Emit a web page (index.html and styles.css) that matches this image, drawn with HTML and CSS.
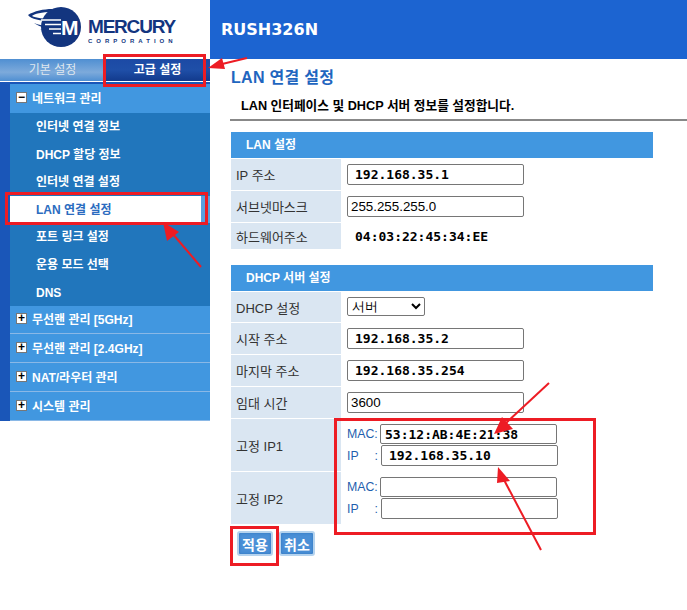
FILE: index.html
```html
<!DOCTYPE html>
<html lang="ko">
<head>
    <meta charset="UTF-8">
    <title>RUSH326N - LAN 연결 설정</title>
    <link rel="stylesheet" href="styles.css">
</head>
<body>
    <header class="top">
        <div class="logo">
            <svg class="logo-mark" width="60" height="46" viewBox="0 0 60 46">
                <circle cx="33" cy="25" r="20" fill="#13357f"/>
                <path d="M0 13 C6 9 16 7 24 7 L24 10 C14 10 6 12 4 14 C8 16 16 17 24 17 L24 19 C12 19 3 17 0 13 Z" fill="#13357f"/>
                <path d="M6 21 C10 23 16 24 24 24 L24 26 C16 26 10 24 6 21 Z" fill="#13357f"/>
                <path d="M12 27 C16 28 20 29 24 29 L24 31 C20 31 16 29 12 27 Z" fill="#13357f"/>
                <path d="M13 18 H33 M17 22.500 H33 M21 27 H33 M25 31.500 H33" stroke="#fff" stroke-width="1.400" fill="none"/>
                <text class="logo-m" x="33" y="33">M</text>
            </svg>
            <div class="logo-words">
                <div class="logo-name">MERCURY</div>
                <div class="logo-sub">CORPORATION</div>
            </div>
        </div>
        <div class="banner">RUSH326N</div>
    </header>

    <div class="page">
        <aside class="side">
            <div class="tabs">
                <div class="tab">기본 설정</div>
                <div class="tab tab-on">고급 설정</div>
            </div>
            <nav class="menu">
                <div class="menu-head"><span class="box">−</span>네트워크 관리</div>
                <div class="menu-sub">
                    <div class="menu-item">인터넷 연결 정보</div>
                    <div class="menu-item">DHCP 할당 정보</div>
                    <div class="menu-item">인터넷 연결 설정</div>
                    <div class="menu-item menu-item-on"><span>LAN 연결 설정</span></div>
                    <div class="menu-item">포트 링크 설정</div>
                    <div class="menu-item">운용 모드 선택</div>
                    <div class="menu-item">DNS</div>
                </div>
                <div class="menu-head"><span class="box">+</span>무선랜 관리 [5GHz]</div>
                <div class="menu-head"><span class="box">+</span>무선랜 관리 [2.4GHz]</div>
                <div class="menu-head"><span class="box">+</span>NAT/라우터 관리</div>
                <div class="menu-head"><span class="box">+</span>시스템 관리</div>
            </nav>
        </aside>

        <main class="content">
            <h1 class="title">LAN 연결 설정</h1>
            <p class="desc">LAN 인터페이스 및 DHCP 서버 정보를 설정합니다.</p>

            <section class="panel panel-lan">
                <h2 class="panel-head">LAN 설정</h2>
                <div class="row row-tall">
                    <div class="label">IP 주소</div>
                    <div class="field"><input class="input hand" value="192.168.35.1"></div>
                </div>
                <div class="row row-tall">
                    <div class="label">서브넷마스크</div>
                    <div class="field"><input class="input" value="255.255.255.0"></div>
                </div>
                <div class="row row-short">
                    <div class="label">하드웨어주소</div>
                    <div class="field"><span class="hand-text">04:03:22:45:34:EE</span></div>
                </div>
            </section>

            <section class="panel panel-dhcp">
                <h2 class="panel-head">DHCP 서버 설정</h2>
                <div class="row row-select">
                    <div class="label">DHCP 설정</div>
                    <div class="field">
                        <select class="select"><option>서버</option></select>
                    </div>
                </div>
                <div class="row row-tall">
                    <div class="label">시작 주소</div>
                    <div class="field"><input class="input hand" value="192.168.35.2"></div>
                </div>
                <div class="row row-tall">
                    <div class="label">마지막 주소</div>
                    <div class="field"><input class="input hand" value="192.168.35.254"></div>
                </div>
                <div class="row row-tall">
                    <div class="label">임대 시간</div>
                    <div class="field"><input class="input" value="3600"></div>
                </div>
                <div class="row row-pair">
                    <div class="label">고정 IP1</div>
                    <div class="pair">
                        <div class="pair-line"><span class="pair-key">MAC:</span><input class="input hand hand-mac" value="53:12:AB:4E:21:38"></div>
                        <div class="pair-line pair-ip"><span class="pair-key">IP<i>:</i></span><input class="input hand" value="192.168.35.10"></div>
                    </div>
                </div>
                <div class="row row-pair">
                    <div class="label">고정 IP2</div>
                    <div class="pair">
                        <div class="pair-line"><span class="pair-key">MAC:</span><input class="input"></div>
                        <div class="pair-line pair-ip"><span class="pair-key">IP<i>:</i></span><input class="input"></div>
                    </div>
                </div>
            </section>

            <div class="actions">
                <button class="btn">적용</button>
                <button class="btn">취소</button>
            </div>
        </main>
    </div>

    <!-- red marks drawn over the screenshot -->
    <svg class="marks" width="687" height="610" viewBox="0 0 687 610">
        <g fill="none" stroke="#ed1c24" stroke-width="3">
            <rect x="104.500" y="55.500" width="100" height="30"/>
            <rect x="6.500" y="193.500" width="200" height="30"/>
            <rect x="335.500" y="419.500" width="259" height="114"/>
            <rect x="231.500" y="527.500" width="46" height="37"/>
        </g>
        <g stroke="#ed1c24" stroke-width="2">
            <line x1="247" y1="58" x2="218" y2="65"/>
            <line x1="201" y1="267" x2="172" y2="233"/>
            <line x1="549" y1="383" x2="505" y2="424"/>
            <line x1="541" y1="550" x2="503" y2="478"/>
        </g>
        <g fill="#ed1c24">
            <polygon points="208,68 222,58 225,69"/>
            <polygon points="163,222 179,232 167,241"/>
            <polygon points="494,434 502,417 513,429"/>
            <polygon points="498,467 510,481 497,483"/>
        </g>
    </svg>
</body>
</html>
```
FILE: styles.css
```css
* {
    margin: 0;
    padding: 0;
    box-sizing: border-box;
}

html {
    height: 100%;
}

body {
    font-family: "Liberation Sans", "Noto Sans CJK KR", sans-serif;
    font-size: 13px;
    color: #333;
    background: #fff;
    position: relative;
    min-height: 100%;
}

/* Header */
.top {
    display: flex;
    height: 59px;
}

.logo {
    width: 210px;
    display: flex;
    padding: 2px 0 0 28px;
}

.logo-m {
    font-family: "Liberation Sans", sans-serif;
    font-size: 21px;
    font-weight: 700;
    fill: #fff;
}

.logo-words {
    margin: 14px 0 0 0;
    color: #13357f;
    font-weight: 700;
}

.logo-name {
    font-size: 19px;
    line-height: 22px;
    letter-spacing: -1.2px;
}

.logo-sub {
    font-size: 6px;
    line-height: 7px;
    letter-spacing: 4px;
}

.banner {
    flex: 1;
    background: #1c64d1;
    color: #fff;
    font-family: "DejaVu Sans", sans-serif;
    font-size: 16px;
    font-weight: 700;
    padding: 20px 0 0 11px;
}

.page {
    display: flex;
}

/* Sidebar */
.side {
    width: 210px;
    flex-shrink: 0;
}

.tabs {
    display: flex;
    height: 23px;
    border-bottom: 1px solid #fff;
    background: #1a56b8;
}

.tab {
    width: 103px;
    text-align: center;
    line-height: 22px;
    font-size: 12px;
    padding-left: 2px;
    color: #dfe7ef;
    background: linear-gradient(to bottom, #4f8fd2, #7daadb 60%, #4f8fd2);
}

.tab-on {
    width: 107px;
    color: #fff;
    font-weight: 700;
    background: linear-gradient(to bottom, #1c4aa5, #1f4fa8 50%, #123a8c);
}

.menu {
    background: #1a56b8;
    padding: 2px 0 0 10px;
}

.menu-head {
    height: 29px;
    display: flex;
    align-items: center;
    background: #4197e0;
    border-bottom: 1px solid #8ab8e6;
    color: #fff;
    font-size: 12px;
    font-weight: 700;
    padding: 0 0 2px 6px;
}

.menu-head:first-child {
    border-bottom: 0;
}

.menu-sub + .menu-head {
    height: 28px;
}

.box {
    width: 11px;
    height: 11px;
    margin-right: 5px;
    border: 1px solid #777;
    background: #fff;
    color: #000;
    font: 700 12px/8px "Liberation Sans", sans-serif;
    text-align: center;
}

.menu-sub {
    background: #2176bc;
}

.menu-item {
    height: 27.600px;
    line-height: 28px;
    padding-left: 26px;
    color: #fff;
    font-size: 12px;
    font-weight: 700;
}

.menu-item-on {
    background: #5aa0e0;
    padding: 0;
}

.menu-item-on span {
    display: block;
    width: 191px;
    height: 100%;
    padding-left: 26px;
    background: #fff;
    color: #2c6cc0;
}

/* Main content */
.content {
    flex: 1;
    padding-left: 20px;
}

.title {
    color: #1f66bf;
    font-size: 16px;
    font-weight: 700;
    line-height: 20px;
    letter-spacing: 0.3px;
    margin-top: 9px;
    padding-left: 1px;
}

.desc {
    color: #000;
    font-size: 12.700px;
    font-weight: 700;
    line-height: 16px;
    padding: 10px 0 5px 11px;
    border-bottom: 2px solid #888;
}

.panel {
    width: 422px;
    margin-left: 1px;
}

.panel-lan {
    margin-top: 11px;
}

.panel-dhcp {
    margin-top: 16px;
}

.panel-head {
    height: 26px;
    line-height: 27px;
    background: #4197e0;
    color: #fff;
    font-size: 12px;
    font-weight: 700;
    padding-left: 15px;
    margin-bottom: 1px;
}

.row {
    display: grid;
    grid-template-columns: 110px 1fr;
    margin-bottom: 1px;
}

.row-tall {
    height: 31px;
}

.row-short {
    height: 26px;
}

.row-select {
    height: 30px;
}

.row-pair {
    height: 52px;
}

.label {
    display: flex;
    align-items: center;
    background: #dae6f2;
    padding-left: 5px;
    font-size: 13px;
    color: #333;
}

.field {
    display: flex;
    align-items: center;
    padding-left: 6px;
}

.input {
    width: 177px;
    height: 21px;
    border: 1px solid #767676;
    border-radius: 2px;
    background: #fff;
    color: #000;
    font-family: "Liberation Sans", sans-serif;
    font-size: 13.330px;
    padding: 0 3px;
}

.hand {
    font-family: "DejaVu Sans Mono", monospace;
    font-weight: 700;
    font-size: 13px;
    padding-left: 7px;
}

.hand-mac {
    padding-left: 4px;
}

.hand-text {
    font-family: "DejaVu Sans Mono", monospace;
    font-weight: 700;
    font-size: 13px;
    color: #000;
    padding-left: 8px;
}

.select {
    width: 78px;
    height: 19px;
    border: 1px solid #767676;
    border-radius: 2px;
    background: #fff;
    color: #000;
    font-size: 13px;
    margin-bottom: 1px;
}

.pair {
    padding: 5px 0 0 6px;
}

.pair-line {
    display: flex;
    align-items: center;
    height: 20px;
}

.pair-ip {
    height: 21px;
    margin-top: 1px;
}

.pair-key {
    width: 33px;
    display: flex;
    justify-content: space-between;
    color: #1f5fae;
    font-size: 12.300px;
    flex-shrink: 0;
}

.pair-key i {
    font-style: normal;
}

.pair-ip .pair-key {
    width: 34px;
    padding-right: 3px;
}

.pair-line .input {
    height: 100%;
}

/* Buttons */
.actions {
    display: flex;
    gap: 6px;
    margin: 7px 0 0 7px;
}

.btn {
    width: 36px;
    height: 25px;
    border: 2px solid #b5d3ee;
    border-radius: 3px;
    background: #4a8fd6;
    box-shadow: inset 0 0 3px #2f74bd;
    color: #fff;
    font-size: 14px;
    font-weight: 700;
    font-family: inherit;
}

/* Overlay marks */
.marks {
    position: absolute;
    top: 0;
    left: 0;
    pointer-events: none;
}
```
